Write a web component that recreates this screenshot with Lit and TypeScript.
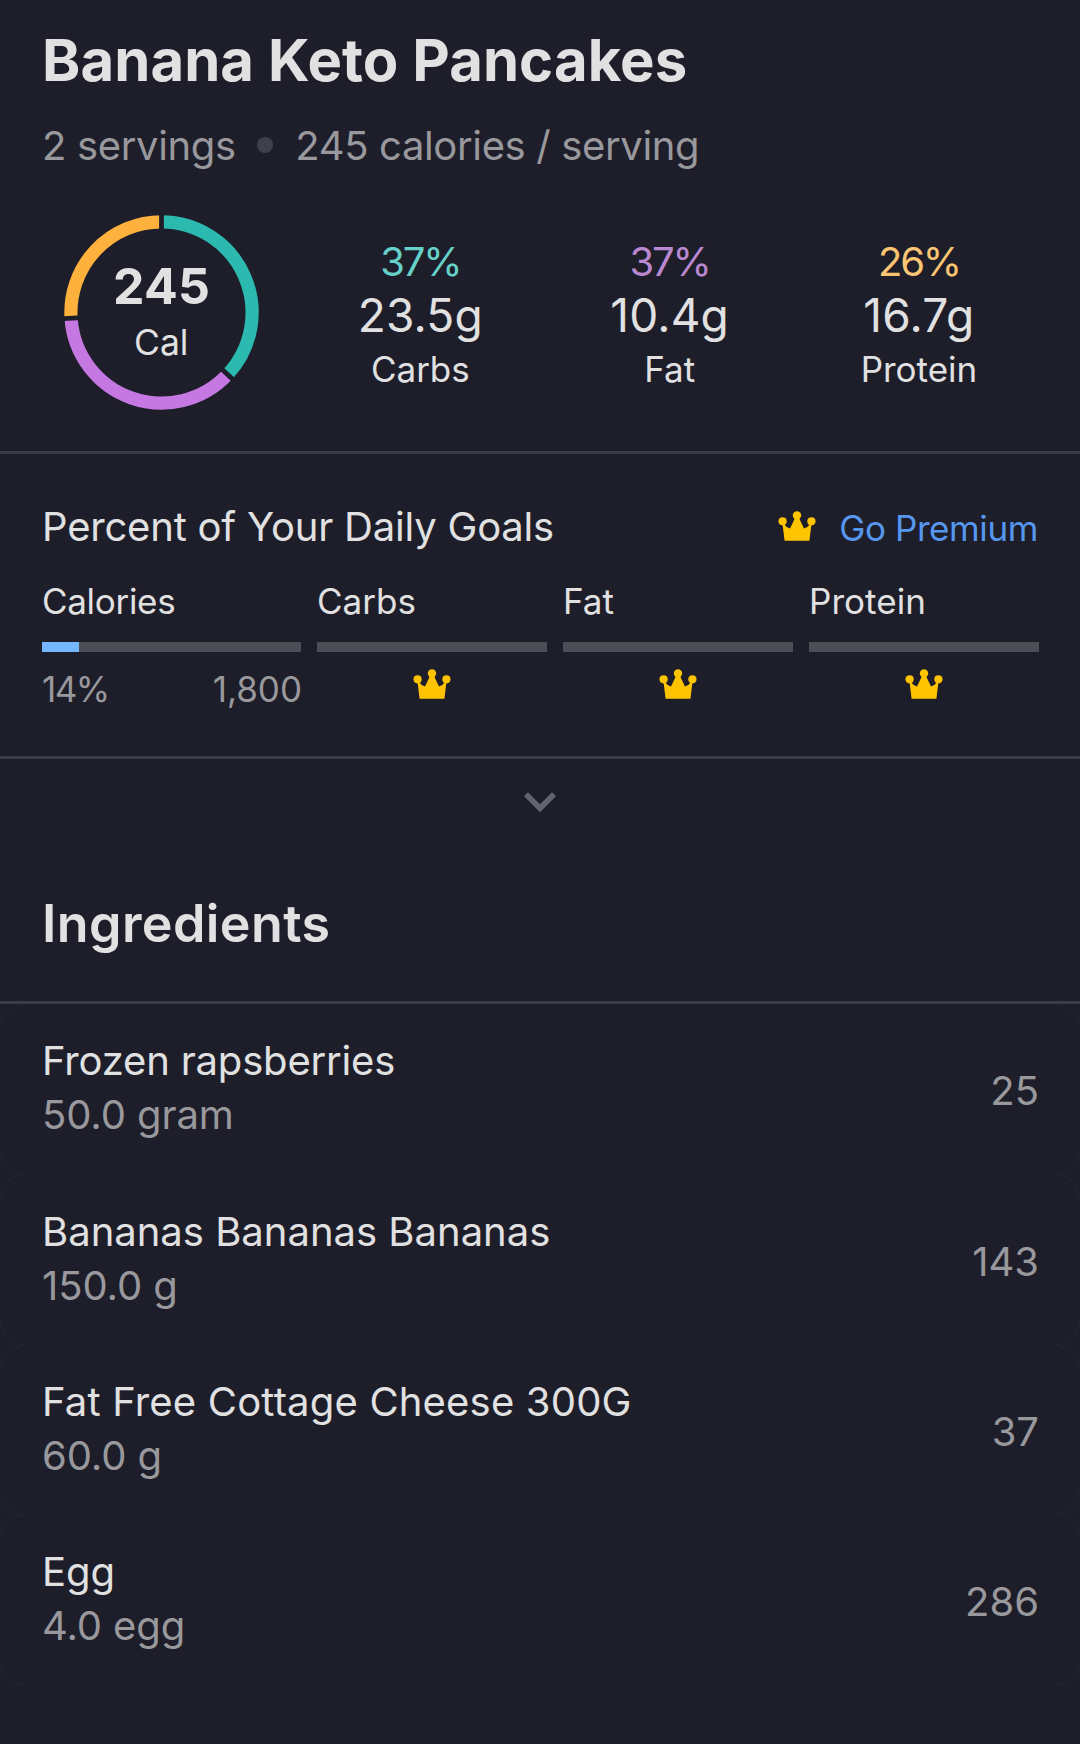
import { LitElement, html, css, svg } from "lit";
import { customElement, property } from "lit/decorators.js";

const MACROS = [
  { name: "Carbs", pct: 37, grams: "23.5g", tone: "teal" },
  { name: "Fat", pct: 37, grams: "10.4g", tone: "purple" },
  { name: "Protein", pct: 26, grams: "16.7g", tone: "amber" },
];

/* track: letter spacing in px for the ingredient name */
const INGREDIENTS = [
  { name: "Frozen rapsberries", amount: "50.0 gram", cal: "25", track: -0.18 },
  { name: "Bananas Bananas Bananas", amount: "150.0 g", cal: "143", track: 0 },
  { name: "Fat Free Cottage Cheese 300G", amount: "60.0 g", cal: "37", track: 0.18 },
  { name: "Egg", amount: "4.0 egg", cal: "286", track: 0 },
];

@customElement("crown-icon")
class CrownIcon extends LitElement {
  static styles = css`
    :host { display: block; width: 38px; height: 30px; }
    .crown { display: block; fill: #ffc400; }
  `;
  render() {
    return html`<svg class="crown" width="38" height="30" viewBox="0 0 38 30">
      <circle cx="4.6" cy="10.3" r="4.1"></circle>
      <circle cx="19" cy="4.4" r="4.2"></circle>
      <circle cx="33.4" cy="10.3" r="4.1"></circle>
      <path d="M4.4 12 L6.4 13.4 Q8.6 16.8 12 17.5 L17 7 H21 L26 17.5 Q29.4 16.8 31.6 13.4 L33.6 12 L31.4 29.7 H6.6 Z"></path>
    </svg>`;
  }
}

@customElement("calorie-ring")
class CalorieRing extends LitElement {
  static styles = css`
    :host { display: grid; width: 195px; height: 195px; }
    .ring, .label { grid-area: 1 / 1; }
    .arc { fill: none; stroke-width: 13.2; }
    .teal { stroke: #2cb9b0; }
    .purple { stroke: #c578e2; }
    .amber { stroke: #ffb13d; }
    .cut { stroke: #1d1e29; stroke-width: 4.8; }
    .label { display: flex; flex-direction: column; align-items: center; padding-top: 41px; color: #e1e1e2; }
    .value { font-size: 50px; line-height: 60px; font-weight: 700; letter-spacing: 0.3px; padding-left: 1px; }
    .unit { font-size: 35.5px; line-height: 54px; }
  `;
  render() {
    const at = (pct: number, r: number) => {
      const a = (pct / 100) * 2 * Math.PI;
      return [97.5 + r * Math.sin(a), 97.5 - r * Math.cos(a)];
    };
    let start = 0;
    const starts: number[] = [];
    const arcs = MACROS.map((m) => {
      const [x1, y1] = at(start, 90.6);
      starts.push(start);
      start += m.pct;
      const [x2, y2] = at(start, 90.6);
      return svg`<path class="arc ${m.tone}" d="M${x1} ${y1} A90.6 90.6 0 0 1 ${x2} ${y2}"></path>`;
    });
    const cuts = starts.map((s) => {
      const [x1, y1] = at(s, 80);
      const [x2, y2] = at(s, 99);
      return svg`<line class="cut" x1=${x1} y1=${y1} x2=${x2} y2=${y2}></line>`;
    });
    return html`<svg class="ring" width="195" height="195" viewBox="0 0 195 195">${arcs}${cuts}</svg>
      <div class="label"><span class="value">245</span><span class="unit">Cal</span></div>`;
  }
}

@customElement("goal-meter")
class GoalMeter extends LitElement {
  @property() name = "";
  @property({ type: Number }) pct = -1;
  @property({ type: Number }) level = 0;
  @property() target = "";
  static styles = css`
    :host { display: flex; flex-direction: column; }
    .name { font-size: 35px; line-height: 44px; letter-spacing: 0.05px; color: #e1e1e2; }
    .tight { letter-spacing: -0.3px; }
    .track { height: 10px; margin-top: 19px; background: #4c4e56; }
    .fill { height: 10px; background: #74b7fd; }
    .foot { display: flex; justify-content: space-between; margin: 15px -1px 0 0; font-size: 35px; line-height: 44px; color: #98989d; }
    .pct { letter-spacing: -1.5px; }
    .locked { display: flex; justify-content: center; margin-top: 17px; }
  `;
  render() {
    const open = this.pct >= 0;
    return html`<span class="name ${open ? "tight" : ""}">${this.name}</span>
      <div class="track">${open ? html`<div class="fill" style="width:${this.level}%"></div>` : null}</div>
      ${open
        ? html`<div class="foot"><span class="pct">${this.pct}%</span><span>${this.target}</span></div>`
        : html`<div class="locked"><crown-icon></crown-icon></div>`}`;
  }
}

@customElement("app-root")
class AppRoot extends LitElement {
  static styles = css`
    :host { display: block; box-sizing: border-box; width: 100%; height: 1744px; overflow: hidden; background: #1d1e29; color: #e1e1e2; font-family: Inter, "Liberation Sans", sans-serif; white-space: nowrap; }
    h1, h2, h3 { margin: 0; }
    .header { padding: 26px 42px 0; box-sizing: border-box; border-bottom: 3px solid #3a3c46; height: 454px; }
    .title { font-size: 58px; line-height: 68px; font-weight: 700; letter-spacing: 0.08px; }
    .meta { display: flex; align-items: center; margin-top: 27px; font-size: 40px; line-height: 50px; letter-spacing: -0.35px; color: #98989d; }
    .dot { width: 16px; height: 16px; border-radius: 50%; background: #3e404b; margin: -2px 22px 0 21.5px; }
    .summary { display: flex; margin-top: 44px; padding-left: 21.7px; }
    .macros { display: grid; grid-template-columns: repeat(3, 249.3px); margin: 23px 0 0 37px; }
    .macro { display: flex; flex-direction: column; align-items: center; }
    .pct { font-size: 40px; line-height: 48px; letter-spacing: -2.2px; }
    .grams { font-size: 46px; line-height: 58px; letter-spacing: 0.2px; }
    .macro-name { font-size: 35px; line-height: 50px; }
    .teal { color: #66d1ca; }
    .purple { color: #b988d0; }
    .amber { color: #fcc573; }
    .goals { box-sizing: border-box; height: 305px; padding: 48px 41px 0 42px; border-bottom: 3px solid #3a3c46; }
    .goals-head { display: flex; align-items: center; justify-content: space-between; height: 50px; }
    .goals-title { font-size: 40px; line-height: 50px; font-weight: 400; letter-spacing: -0.2px; }
    .premium { display: flex; align-items: center; gap: 23px; font-size: 35px; line-height: 44px; letter-spacing: -0.4px; padding-right: 1px; color: #5697ee; }
    .premium-icon { margin-bottom: 2px; }
    .premium-text { padding-top: 1px; }
    .meters { display: grid; grid-template-columns: 259px 230px 230px 230px; column-gap: 16px; margin-top: 27px; }
    .expand { display: flex; justify-content: center; height: 110px; padding-top: 33px; box-sizing: border-box; }
    .chevron { fill: none; stroke: #62646d; stroke-width: 5.6; }
    .section { box-sizing: border-box; height: 135px; padding: 25px 42px 0; border-bottom: 3px solid #3a3c46; font-size: 52px; line-height: 60px; font-weight: 600; letter-spacing: 0.4px; }
    .row {
      display: flex; align-items: center; justify-content: space-between; box-sizing: border-box; height: 170.25px; padding: 0 41px 0 42px; font-size: 40px;
      background-repeat: no-repeat;
      background-size: 24px 24px;
      background-position: 0 0, 100% 0, 0 100%, 100% 100%;
      background-image:
        radial-gradient(circle at 100% 100%, transparent 22.6px, #242731 23.3px, transparent 24px),
        radial-gradient(circle at 0 100%, transparent 22.6px, #242731 23.3px, transparent 24px),
        radial-gradient(circle at 100% 0, transparent 22.6px, #242731 23.3px, transparent 24px),
        radial-gradient(circle at 0 0, transparent 22.6px, #242731 23.3px, transparent 24px);
    }
    .item { display: flex; flex-direction: column; line-height: 54px; padding-bottom: 1.6px; }
    .muted { color: #98989d; }
    .amount { letter-spacing: -0.1px; }
    .cal { padding-top: 3.4px; }
  `;
  render() {
    return html`
      <header class="header">
        <h1 class="title">Banana Keto Pancakes</h1>
        <div class="meta"><span>2 servings</span><i class="dot"></i><span>245 calories / serving</span></div>
        <div class="summary">
          <calorie-ring></calorie-ring>
          <div class="macros">
            ${MACROS.map((m) => html`<div class="macro">
              <span class="pct ${m.tone}">${m.pct}%</span>
              <span class="grams">${m.grams}</span>
              <span class="macro-name">${m.name}</span>
            </div>`)}
          </div>
        </div>
      </header>
      <section class="goals">
        <div class="goals-head">
          <h3 class="goals-title">Percent of Your Daily Goals</h3>
          <div class="premium"><crown-icon class="premium-icon"></crown-icon><span class="premium-text">Go Premium</span></div>
        </div>
        <div class="meters">
          <goal-meter name="Calories" pct="14" level="14.3" target="1,800"></goal-meter>
          ${MACROS.map((m) => html`<goal-meter name=${m.name}></goal-meter>`)}
        </div>
      </section>
      <div class="expand">
        <svg class="chevron" width="32" height="21" viewBox="0 0 32 21"><path d="M2 2.2 L16 16.2 L30 2.2"></path></svg>
      </div>
      <h2 class="section">Ingredients</h2>
      ${INGREDIENTS.map((i) => html`<div class="row">
        <div class="item"><span style="letter-spacing:${i.track}px">${i.name}</span><span class="muted amount">${i.amount}</span></div>
        <span class="muted cal">${i.cal}</span>
      </div>`)}
    `;
  }
}
